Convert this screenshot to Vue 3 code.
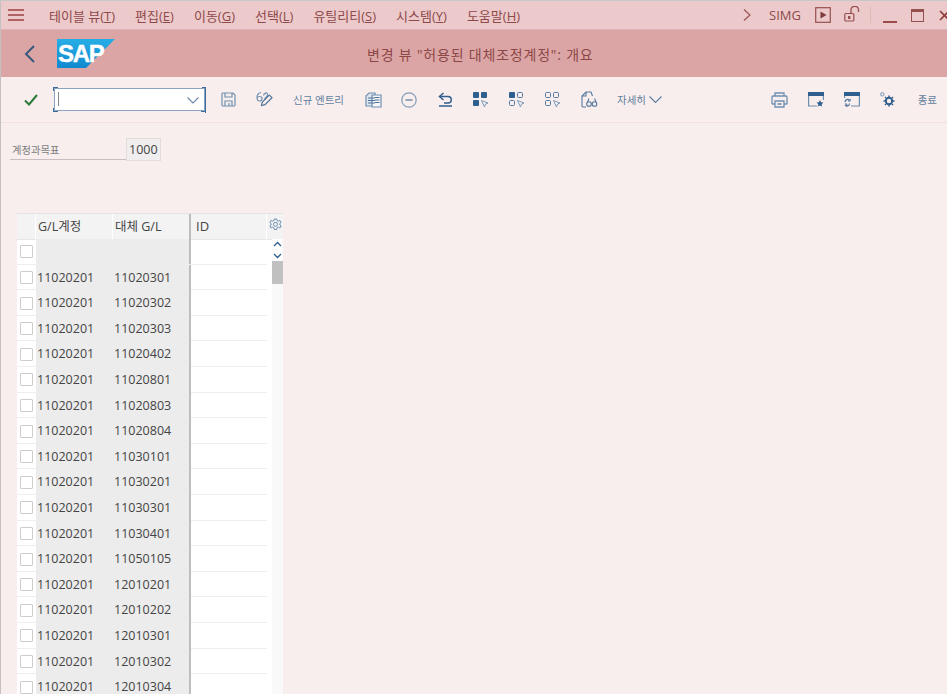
<script setup>
const menus = [
  { label: '테이블 뷰', key: 'T' },
  { label: '편집', key: 'E' },
  { label: '이동', key: 'G' },
  { label: '선택', key: 'L' },
  { label: '유틸리티', key: 'S' },
  { label: '시스템', key: 'Y' },
  { label: '도움말', key: 'H' },
]

const targets = [
  '11020301', '11020302', '11020303', '11020402', '11020801', '11020803',
  '11020804', '11030101', '11030201', '11030301', '11030401', '11050105',
  '12010201', '12010202', '12010301', '12010302', '12010304',
]

const rows = [
  { account: '', target: '' },
  ...targets.map((target) => ({ account: '11020201', target })),
]
</script>

<template>
  <div class="page">
    <div class="menubar">
      <svg class="burger" width="16" height="12" viewBox="0 0 16 12">
        <path d="M0 1h16M0 6h16M0 11h16" stroke="#9c3f42" stroke-width="1.7" />
      </svg>
      <div class="menus">
        <span v-for="m in menus" :key="m.key" class="menu">{{ m.label }}(<u>{{ m.key }}</u>)</span>
      </div>
      <div class="winbtns">
        <svg class="w-chev" width="8" height="12" viewBox="0 0 8 12">
          <path d="M1 .5 7 6 1 11.5" fill="none" stroke="#96504f" stroke-width="1.1" />
        </svg>
        <span class="simg">SIMG</span>
        <svg class="w-play" width="16" height="16" viewBox="0 0 16 16">
          <rect x=".7" y=".7" width="14.6" height="14.6" fill="none" stroke="#96504f" stroke-width="1.2" />
          <path d="M5.5 4.5v7l6-3.5z" fill="#7e3c3c" />
        </svg>
        <svg class="w-lock" width="16" height="16" viewBox="0 0 16 16">
          <rect x=".8" y="7.5" width="9" height="7.5" rx="1" fill="none" stroke="#96504f" stroke-width="1.2" />
          <rect x="4" y="10" width="2.4" height="3" fill="#96504f" />
          <path d="M7 7V3.5a3.5 3 0 0 1 7.5 0V6" fill="none" stroke="#96504f" stroke-width="1.3" />
        </svg>
        <span class="w-sep"></span>
        <span class="w-min"></span>
        <span class="w-max"></span>
        <svg class="w-close" width="11" height="11" viewBox="0 0 11 11">
          <path d="M1 1l9 9M10 1l-9 9" stroke="#8f3c3c" stroke-width="1.6" />
        </svg>
      </div>
    </div>

    <div class="titlebar">
      <svg class="back" width="11" height="18" viewBox="0 0 11 18">
        <path d="M10 1 2 9l8 8" fill="none" stroke="#38587c" stroke-width="2" />
      </svg>
      <svg class="logo" width="58" height="29" viewBox="0 0 58 29">
        <defs>
          <linearGradient id="sapblue" x1="0" y1="0" x2="0" y2="1">
            <stop offset="0" stop-color="#27aee6" />
            <stop offset="1" stop-color="#1189cf" />
          </linearGradient>
        </defs>
        <path d="M0 0h58L29 29H0z" fill="url(#sapblue)" />
        <text x="1" y="23" class="logotext">SAP</text>
      </svg>
      <div class="title">변경 뷰 "허용된 대체조정계정": 개요</div>
    </div>

    <div class="toolbar">
      <div class="btn first">
        <svg width="14" height="12" viewBox="0 0 14 12">
          <path d="M1 6.5 5 10.5 13 1" fill="none" stroke="#2c7a3a" stroke-width="2" />
        </svg>
      </div>
      <div class="combo">
        <i class="caret"></i>
        <svg class="combo-arrow" width="12" height="7" viewBox="0 0 12 7">
          <path d="M.5.5 6 6 11.500.5" fill="none" stroke="#6c88a6" stroke-width="1.1" />
        </svg>
        <i class="corner tl"></i><i class="corner tr"></i><i class="corner bl"></i><i class="corner br"></i>
      </div>
      <div class="btn">
        <svg width="15" height="15" viewBox="0 0 15 15" fill="none" stroke="#6f8fb0" stroke-width="1.2">
          <path d="M1 2a1 1 0 0 1 1-1h10l2 2v10a1 1 0 0 1-1 1H2a1 1 0 0 1-1-1z" />
          <path d="M4 1v4h7V1M4 14V9h7v5M8 11v3" />
        </svg>
      </div>
      <div class="btn">
        <svg width="17" height="17" viewBox="0 0 17 17" fill="none" stroke="#6f8fb0" stroke-width="1.2">
          <path d="M5 1.500C2.500 2 1 4 1 6.500S2 10 3.500 10 6 9 6 7.500 5 5.500 3.500 5.500 1.500 6 1 7" />
          <path d="M7.500 4.500C8 2 11 1 11.500 3s-1 3-3 5" />
          <path d="M5.500 14.500l.8-3.500 7-7 2.700 2.700-7 7z" stroke="#4f7399" />
        </svg>
      </div>
      <div class="btn text">신규 엔트리</div>
      <div class="btn">
        <svg width="17" height="17" viewBox="0 0 17 17" fill="none" stroke="#6f8fb0" stroke-width="1.2">
          <path d="M1 15V5l3-3h6v13z" fill="#dfe6ee" />
          <path d="M7 4h9v12H7z" fill="#f5f5f7" />
          <path d="M3 7h7M3 9.500h7M3 12h7M10 6.500h4.500M10 9h4.500M10 11.500h4.500" stroke="#4f7399" stroke-width="1" />
        </svg>
      </div>
      <div class="btn">
        <svg width="16" height="16" viewBox="0 0 16 16" fill="none" stroke="#7f9cba" stroke-width="1.2">
          <circle cx="8" cy="8" r="7.200" />
          <path d="M4.500 8h7" stroke="#4f7399" />
        </svg>
      </div>
      <div class="btn">
        <svg width="15" height="15" viewBox="0 0 15 15" fill="none" stroke="#2f5f8e" stroke-width="1.5">
          <path d="M5.500 1 1.500 4.500l4 3.500" />
          <path d="M1.500 4.500H10a3.200 3.200 0 0 1 0 6.500H6" />
          <path d="M1 14h13" />
        </svg>
      </div>
      <div class="btn">
        <svg width="16" height="16" viewBox="0 0 16 16">
          <rect x="0" y="0" width="6" height="6" rx="1" fill="#2f5f8e" />
          <rect x="8" y="0" width="6" height="6" rx="1" fill="#2f5f8e" />
          <rect x="0" y="8" width="6" height="6" rx="1" fill="#2f5f8e" />
          <path d="M8.500 8.500 15 11l-2.500 1-1 3z" fill="#f6f3f4" stroke="#7f9cba" />
        </svg>
      </div>
      <div class="btn">
        <svg width="16" height="16" viewBox="0 0 16 16">
          <rect x="0" y="0" width="6" height="6" rx="1" fill="#2f5f8e" />
          <rect x="8.500" y=".5" width="5" height="5" rx="1" fill="none" stroke="#55799e" />
          <rect x=".5" y="8.500" width="5" height="5" rx="1" fill="none" stroke="#55799e" />
          <path d="M8.500 8.500 15 11l-2.500 1-1 3z" fill="#f6f3f4" stroke="#7f9cba" />
        </svg>
      </div>
      <div class="btn">
        <svg width="16" height="16" viewBox="0 0 16 16">
          <rect x=".5" y=".5" width="5" height="5" rx="1" fill="none" stroke="#55799e" />
          <rect x="8.500" y=".5" width="5" height="5" rx="1" fill="none" stroke="#55799e" />
          <rect x=".5" y="8.500" width="5" height="5" rx="1" fill="none" stroke="#55799e" />
          <path d="M8.500 8.500 15 11l-2.500 1-1 3z" fill="#f6f3f4" stroke="#7f9cba" />
        </svg>
      </div>
      <div class="btn">
        <svg width="17" height="17" viewBox="0 0 17 17" fill="none" stroke="#55799e" stroke-width="1.1">
          <path d="M5 16H2a1 1 0 0 1-1-1V5l4-4h5l1.500 4" />
          <path d="M5 1v4H1" />
          <circle cx="8" cy="13" r="2.300" />
          <circle cx="13.500" cy="13" r="2.300" />
          <path d="M10.300 12.500h1M6.500 11 8 7.500M15 11 13.500 7.500" />
        </svg>
      </div>
      <div class="btn text more">
        자세히
        <svg width="13" height="7" viewBox="0 0 13 7">
          <path d="M.5.500 6.500 6.500 12.500.500" fill="none" stroke="#5b7ea3" stroke-width="1.1" />
        </svg>
      </div>

      <div class="btn push">
        <svg width="17" height="16" viewBox="0 0 17 16" fill="none" stroke="#6f8fb0" stroke-width="1.300">
          <path d="M4 4V1h9v3" />
          <path d="M4 12H1.500A.8.8 0 0 1 1 11V5a1 1 0 0 1 1-1h13a1 1 0 0 1 1 1v6a.8.8 0 0 1-.5 1H13" />
          <path d="M4 9h9v6H4z" />
          <path d="M6.500 12h4" stroke="#4f7399" />
        </svg>
      </div>
      <div class="btn">
        <svg width="16" height="15" viewBox="0 0 16 15" fill="none">
          <path d="M.6 3v11H9M15.400 3v5" stroke="#6f8fb0" stroke-width="1.200" />
          <rect x="0" y="0" width="16" height="4" fill="#2f5f8e" />
          <path d="m12 8 1.100 2.300 2.400.3-1.800 1.600.5 2.400-2.200-1.200-2.200 1.200.5-2.400-1.800-1.600 2.400-.3z" fill="#2f5f8e" />
        </svg>
      </div>
      <div class="btn">
        <svg width="16" height="15" viewBox="0 0 16 15" fill="none">
          <path d="M15.400 3v11H7M.6 3v3" stroke="#6f8fb0" stroke-width="1.200" />
          <rect x="0" y="0" width="16" height="4" fill="#2f5f8e" />
          <path d="M1 10a2.500 2.500 0 0 1 4.500-1.500M5.500 11.500A2.500 2.500 0 0 1 1 13" stroke="#4f7399" stroke-width="1.200" />
          <path d="M4 9h2.200V6.800M.8 12h2v2" stroke="#4f7399" />
        </svg>
      </div>
      <div class="btn">
        <svg width="15" height="15" viewBox="0 0 15 15" fill="none" stroke="#2f5f8e">
          <circle cx="2.300" cy="2.300" r="1.700" stroke="#6f8fb0" />
          <circle cx="9" cy="9" r="3.200" stroke-width="2" />
          <path d="M9 3.500v1.500M9 13v1.500M3.500 9H5M13 9h1.500M5 5l1 1M12 12l1 1M13 5l-1 1M6 12l-1 1" stroke-width="1.500" />
        </svg>
      </div>
      <div class="btn text exit">종료</div>
    </div>

    <div class="content">
      <div class="field">
        <label>계정과목표</label>
        <span class="value">1000</span>
      </div>

      <div class="table">
        <div class="thead">
          <div class="th corner-cell"></div>
          <div class="th">G/L계정</div>
          <div class="th key-end">대체 G/L</div>
          <div class="th id">ID</div>
          <div class="th gear">
            <svg width="13" height="13" viewBox="0 0 13 13" fill="none" stroke="#6b8db0" stroke-width="1">
              <path d="M5.300 1h2.400l.4 1.600 1.400.6 1.400-.8 1.200 2-1.200 1.100v1.500L12.100 8l-1.200 2-1.400-.8-1.400.6-.4 1.700H5.300l-.4-1.700-1.400-.6-1.400.8L.9 8l1.200-1V5.500L.9 4.400l1.200-2 1.400.8 1.400-.6z" />
              <circle cx="6.500" cy="6.300" r="2" />
            </svg>
          </div>
        </div>
        <div class="tbody">
          <div class="rows">
            <div v-for="(r, i) in rows" :key="i" class="tr">
              <div class="td sel"><i class="check"></i></div>
              <div class="td key">{{ r.account }}</div>
              <div class="td key key-end">{{ r.target }}</div>
              <div class="td"></div>
            </div>
          </div>
          <div class="scrollbar">
            <svg class="arrows" width="9" height="20" viewBox="0 0 9 20" fill="none" stroke="#2f5f8e" stroke-width="1.300">
              <path d="M1 6l3.500-3.500L8 6M1 14l3.500 3.500L8 14" />
            </svg>
            <div class="thumb"></div>
          </div>
        </div>
      </div>
    </div>
  </div>
</template>

<style>
html, body {
  margin: 0;
  overflow: hidden;
}
</style>

<style scoped>
.page {
  width: 947px;
  height: 694px;
  box-sizing: border-box;
  overflow: hidden;
  border-left: 1px solid #c4c0c0;
  border-top: 1px solid #c8c8c8;
  background: #f8eeed;
  font-family: "Open Sans", "Noto Sans CJK KR", sans-serif;
}

.menubar {
  height: 28px;
  display: flex;
  align-items: center;
  background: #ecc9ca;
  border-bottom: 1px solid #dcb6b6;
  color: #8e4a4a;
  font-size: 13px;
}
.burger {
  margin-left: 7px;
  flex: none;
}
.menus {
  display: flex;
  gap: 20px;
  margin-left: 25px;
}
.menu {
  white-space: nowrap;
}
.winbtns {
  margin-left: auto;
  display: flex;
  align-items: center;
  overflow: hidden;
  width: 204px;
  flex: none;
}
.w-chev { flex: none; }
.simg {
  margin-left: 18px;
  font-size: 13px;
  width: 31px;
}
.w-play {
  flex: none;
  margin-left: 15px;
}
.w-lock {
  flex: none;
  margin-left: 13px;
  margin-top: -2px;
}
.w-sep {
  flex: none;
  width: 1px;
  height: 16px;
  margin-left: 10px;
  background: #deb9b9;
}
.w-min {
  flex: none;
  width: 14px;
  height: 2px;
  margin: 13px 0 0 12px;
  background: #9c4a4a;
}
.w-max {
  flex: none;
  box-sizing: border-box;
  width: 13px;
  height: 13px;
  margin-left: 14px;
  border: 1.500px solid #96504f;
  border-top-width: 3px;
}
.w-close {
  flex: none;
  margin-left: 15px;
}

.titlebar {
  height: 47px;
  display: flex;
  align-items: center;
  position: relative;
  background: #dca5a5;
  color: #8c4747;
}
.back {
  margin-left: 23px;
  flex: none;
}
.logo {
  margin-left: 22px;
  flex: none;
}
.logotext {
  fill: #fff;
  font-family: "Liberation Sans", sans-serif;
  font-weight: 700;
  font-size: 24px;
  letter-spacing: -1.300px;
  stroke: #fff;
  stroke-width: .4px;
}
.title {
  position: absolute;
  left: 366px;
  top: 14px;
  font-size: 14px;
  letter-spacing: .8px;
  white-space: nowrap;
}

.toolbar {
  height: 45px;
  display: flex;
  align-items: center;
  background: #f9eeee;
  border-bottom: 1px solid #f5dfdf;
}
.btn {
  flex: none;
  width: 36px;
  height: 36px;
  display: flex;
  align-items: center;
  justify-content: center;
}
.btn.first {
  margin-left: 12px;
}
.btn.text {
  width: auto;
  padding: 0 11px;
  font-size: 10.500px;
  color: #627f9e;
  white-space: nowrap;
}
.btn.more {
  padding: 0 10px;
  gap: 3px;
}
.btn.push {
  margin-left: auto;
}
.btn.exit {
  padding: 0 10px 0 12px;
}

.combo {
  position: relative;
  box-sizing: border-box;
  flex: none;
  width: 151px;
  height: 23px;
  margin: 0 5px;
  background: #fff;
  border: 1px solid #8aa4bf;
}
.caret {
  position: absolute;
  left: 3px;
  top: 3px;
  width: 1px;
  height: 14px;
  background: #888;
}
.combo-arrow {
  position: absolute;
  right: 5px;
  top: 8px;
}
.corner {
  position: absolute;
  width: 4px;
  height: 3px;
  border: 0 solid #3d6c9c;
}
.corner.tl { left: -2px; top: -2px; border-width: 1.500px 0 0 1.500px; }
.corner.tr { right: -2px; top: -2px; border-width: 1.500px 1.500px 0 0; }
.corner.bl { left: -2px; bottom: -2px; border-width: 0 0 1.500px 1.500px; }
.corner.br { right: -2px; bottom: -2px; border-width: 0 1.500px 1.500px 0; }

.content {
  padding: 15px 0 0 9px;
}
.field {
  display: flex;
  height: 22px;
}
.field label {
  width: 116px;
  padding: 6px 0 0 2px;
  border-bottom: 1px solid #c9bfc0;
  font-size: 10.300px;
  line-height: 12px;
  color: #7c7c7c;
  box-sizing: border-box;
  height: 22px;
}
.value {
  box-sizing: border-box;
  width: 35px;
  height: 23px;
  border: 1px solid #e4dcdc;
  background: #f0eeee;
  color: #444;
  font-size: 12.500px;
  line-height: 21px;
  padding-left: 2px;
}

.table {
  width: 266px;
  margin: 53px 0 0 7px;
  color: #444;
  font-size: 12.500px;
}
.thead {
  display: grid;
  grid-template-columns: 19px 77px 78px 76px 16px;
  height: 26px;
  background: #f3f3f3;
  border-top: 1px solid #e6e2e2;
  box-sizing: border-box;
}
.th {
  padding-left: 2px;
  line-height: 25px;
  border-right: 1px solid #fff;
  border-bottom: 1px solid #e6e6e6;
  white-space: nowrap;
  font-size: 12.500px;
}
.th.id {
  padding-left: 5px;
  font-size: 13px;
}
.th.key-end {
  border-right: 2px solid #bdbdbd;
}
.th.gear {
  padding: 4px 0 0 2px;
  line-height: 0;
  border-right: 0;
}
.tbody {
  display: flex;
  background: #fff;
}
.rows {
  flex: none;
  width: 250px;
}
.tr {
  display: grid;
  grid-template-columns: 19px 77px 78px 76px;
  height: 25.600px;
  box-sizing: border-box;
  border-bottom: 1px solid #eeeeee;
}
.td {
  line-height: 26px;
  padding-left: 1px;
}
.td.sel {
  padding: 0;
  display: flex;
  align-items: center;
  justify-content: center;
}
.td.key {
  background: #ececec;
}
.td.key-end {
  border-right: 2px solid #bdbdbd;
}
.check {
  box-sizing: border-box;
  width: 13px;
  height: 13px;
  background: #fff;
  border: 1px solid #cfcccd;
  border-radius: 1px;
}
.scrollbar {
  flex: none;
  width: 11px;
  margin-left: 5px;
  background: #f9f9f9;
}
.arrows {
  display: block;
  margin: 0 0 0 1px;
  padding: 1px 0;
  background: #fff;
}
.thumb {
  height: 23px;
  background: #c0c0c0;
}
</style>
